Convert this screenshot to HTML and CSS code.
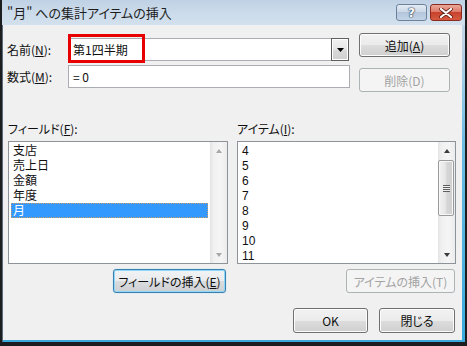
FILE: index.html
```html
<!DOCTYPE html>
<html lang="ja">
<head>
<meta charset="utf-8">
<title>集計アイテムの挿入</title>
<link rel="stylesheet" href="styles.css">
</head>
<body>
<div class="window">
  <div class="titlebar">
    <span class="title">"月" への集計アイテムの挿入</span>
    <div class="caption-btns">
      <span class="cbtn help">?</span>
      <span class="cbtn close"><svg width="14" height="10" viewBox="0 0 14 10"><path d="M2 1 L12 9 M12 1 L2 9" stroke="#5a1a10" stroke-width="3.6" stroke-linecap="round"/><path d="M2 1 L12 9 M12 1 L2 9" stroke="#ffffff" stroke-width="2.2" stroke-linecap="round"/></svg></span>
    </div>
  </div>
  <div class="client">
    <div class="top">
      <div class="fields">
        <span class="lbl">名前(<u>N</u>):</span>
        <div class="combo">
          <span class="combo-text">第1四半期</span>
          <span class="drop"><svg width="7" height="4" viewBox="0 0 7 4"><path d="M0 0 H7 L3.5 4 Z" fill="#000"/></svg></span>
        </div>
        <span class="lbl">数式(<u>M</u>):</span>
        <div class="textbox">=&nbsp;0</div>
      </div>
      <div class="side">
        <span class="btn">追加(<u>A</u>)</span>
        <span class="btn disabled">削除(D)</span>
      </div>
    </div>
    <div class="lists">
      <div class="col">
        <div class="lbl list-lbl">フィールド(<u>F</u>):</div>
        <div class="listbox">
          <div class="items">
            <div class="row">支店</div>
            <div class="row">売上日</div>
            <div class="row">金額</div>
            <div class="row">年度</div>
            <div class="row sel">月</div>
          </div>
          <div class="scrollbar off">
            <span class="arrow up"></span>
            <span class="track"></span>
            <span class="arrow down"></span>
          </div>
        </div>
        <div class="col-actions"><span class="btn focus wide-l">フィールドの挿入(<u>E</u>)</span></div>
      </div>
      <div class="col">
        <div class="lbl list-lbl">アイテム(<u>I</u>):</div>
        <div class="listbox">
          <div class="items">
            <div class="row">4</div>
            <div class="row">5</div>
            <div class="row">6</div>
            <div class="row">7</div>
            <div class="row">8</div>
            <div class="row">9</div>
            <div class="row">10</div>
            <div class="row">11</div>
          </div>
          <div class="scrollbar">
            <span class="arrow up"></span>
            <span class="track"><span class="thumb"><span class="grip"></span></span></span>
            <span class="arrow down"></span>
          </div>
        </div>
        <div class="col-actions right1"><span class="btn disabled wide-r">アイテムの挿入(T)</span></div>
      </div>
    </div>
    <div class="footer">
      <span class="btn ok">OK</span>
      <span class="btn ok close-btn">閉じる</span>
    </div>
  </div>
  <div class="highlight"></div>
</div>
</body>
</html>
```

FILE: styles.css
```css
* { box-sizing: border-box; }
html, body { margin: 0; padding: 0; }
body {
  width: 467px;
  height: 346px;
  background: #1b1d1f;
  font-family: "Noto Sans CJK JP", "Noto Sans", sans-serif;
  font-size: 12px;
  font-feature-settings: "palt";
  color: #0f0f0f;
  overflow: hidden;
}
u { text-decoration: underline; text-underline-offset: 1px; }

.window {
  position: relative;
  margin-left: 2px;
  width: 463px;
  height: 342px;
  display: flex;
  flex-direction: column;
  background: linear-gradient(to bottom, #c7d7e8 0, #bfd3e7 40px, #6fbde2 140px, #3aaadd 100%);
  box-shadow: inset 1px 0 0 #5b6b7c;
}

.titlebar {
  height: 25px;
  flex: none;
  display: flex;
  align-items: center;
  justify-content: space-between;
  padding: 0 3px 0 5px;
  background: linear-gradient(to bottom, #bfd1e4 0, #cbdbeb 50%, #d3e1ee 100%);
}
.title {
  font-size: 13px;
  color: #1e1e1e;
}
.caption-btns { display: flex; gap: 3px; align-self: flex-start; margin-top: 4px; }
.cbtn {
  height: 17px;
  border-radius: 3px;
  display: flex;
  align-items: center;
  justify-content: center;
}
.help {
  width: 31px;
  border: 1px solid #6c829c;
  background: linear-gradient(to bottom, #e4ecf5 0, #cbd8e7 45%, #b3c6dc 50%, #c3d4e6 100%);
  color: #ffffff;
  font-family: "DejaVu Sans", sans-serif;
  font-weight: bold;
  font-size: 12px;
  text-shadow: 0 0 1px #2c3e55, 0 0 1px #2c3e55, 0 0 2px #2c3e55;
}
.close {
  width: 32px;
  border: 1px solid #8a2a1e;
  background: linear-gradient(to bottom, #eaa99b 0, #dd7a68 45%, #c8422d 50%, #d55a40 100%);
}

.client {
  flex: 1;
  margin: 0 3px 2px 1px;
  background: #f0f0f0;
  padding: 8px 7px 0 4px;
  display: flex;
  flex-direction: column;
}

.lbl { line-height: 16px; white-space: nowrap; }

.top { display: flex; align-items: flex-start; }
.fields {
  display: grid;
  grid-template-columns: 61px 282px;
  row-gap: 4px;
  margin-top: 5px;
  align-items: center;
}
.combo {
  height: 23px;
  width: 281px;
  border: 1px solid #abadb3;
  background: #ffffff;
  display: flex;
  align-items: center;
  justify-content: space-between;
}
.combo-text { padding-left: 4px; }
.drop {
  width: 18px;
  height: 23px;
  margin: -1px -1px -1px 0;
  border: 1px solid #5f5f5f;
  box-shadow: inset 0 0 0 1px #ffffff;
  background: linear-gradient(to bottom, #f2f2f2 0, #e6e6e6 50%, #d9d9d9 51%, #d0d0d0 100%);
  display: flex;
  align-items: center;
  justify-content: center;
}
.textbox {
  height: 23px;
  border: 1px solid #abadb3;
  background: #ffffff;
  padding-left: 4px;
  line-height: 21px;
}

.side { margin-left: 9px; display: flex; flex-direction: column; gap: 11px; }

.btn {
  display: flex;
  align-items: center;
  justify-content: center;
  height: 24px;
  width: 91px;
  border: 1px solid #707070;
  border-radius: 3px;
  box-shadow: inset 0 0 0 1px #fcfcfc;
  background: linear-gradient(to bottom, #f2f2f2 0, #ebebeb 50%, #dddddd 51%, #cfcfcf 100%);
  color: #0f0f0f;
  white-space: nowrap;
}
.btn.disabled {
  border-color: #adb2b5;
  background: #f4f4f4;
  box-shadow: none;
  color: #a3a3a3;
}
.btn.focus {
  border-color: #3c7fb1;
  box-shadow: inset 0 0 0 1px #8fd8f5, 0 0 1px #5fc4ef;
  background: linear-gradient(to bottom, #f0f2f4 0, #e9ebed 50%, #dadcde 51%, #cdd0d3 100%);
}
.wide-l { width: 113px; }
.wide-r { width: 109px; }

.lists {
  display: grid;
  grid-template-columns: 220px 219px;
  column-gap: 9px;
  margin-top: 29px;
  margin-left: 1px;
}
.list-lbl { margin-bottom: 4px; }
.listbox {
  height: 123px;
  border: 1px solid #8e9299;
  background: #ffffff;
  display: flex;
}
.items { flex: 1; padding: 1px 2px 0 2px; }
.row {
  height: 15px;
  line-height: 17px;
  padding-left: 2px;
  white-space: nowrap;
  font-family: "Liberation Sans", "Noto Sans CJK JP", sans-serif;
}
.row.sel {
  background: #3399ff;
  color: #ffffff;
  outline: 1px dotted #c79a6d;
  outline-offset: -1px;
}

.scrollbar {
  width: 17px;
  display: flex;
  flex-direction: column;
  background: linear-gradient(to right, #e3e3e3 0, #f0f0f0 20%, #f5f5f5 60%, #ececec 100%);
}
.arrow {
  height: 17px;
  flex: none;
  display: flex;
  align-items: center;
  justify-content: center;
}
.arrow::before {
  content: "";
  width: 0; height: 0;
  border-left: 3.5px solid transparent;
  border-right: 3.5px solid transparent;
}
.arrow.up::before { border-bottom: 4px solid #3b3b3b; }
.arrow.down::before { border-top: 4px solid #3b3b3b; }
.scrollbar.off .arrow.up::before { border-bottom-color: #a8a8a8; }
.scrollbar.off .arrow.down::before { border-top-color: #a8a8a8; }
.track { flex: 1; display: flex; flex-direction: column; }
.thumb {
  margin: 1px 1px 0 0;
  height: 56px;
  border: 1px solid #9a9a9a;
  border-radius: 2px;
  box-shadow: inset 0 0 0 1px #f8f8f8;
  background: linear-gradient(to right, #f2f2f2 0, #e6e6e6 45%, #d6d6d6 55%, #cfcfcf 100%);
  display: flex;
  align-items: center;
  justify-content: center;
}
.grip {
  width: 7px;
  height: 7px;
  background: repeating-linear-gradient(to bottom, #5e5e5e 0, #5e5e5e 1px, #eeeeee 1px, #eeeeee 2px);
}

.col-actions { display: flex; justify-content: flex-end; margin-top: 5px; padding-right: 2px; }
.col-actions.right1 { padding-right: 1px; }

.footer {
  display: flex;
  justify-content: flex-end;
  gap: 11px;
  margin-top: 15px;
}
.ok { width: 75px; height: 25px; }
.close-btn { width: 76px; }

.highlight {
  position: absolute;
  left: 66px;
  top: 34px;
  width: 77px;
  height: 29px;
  border: 3px solid #e80000;
}
```
